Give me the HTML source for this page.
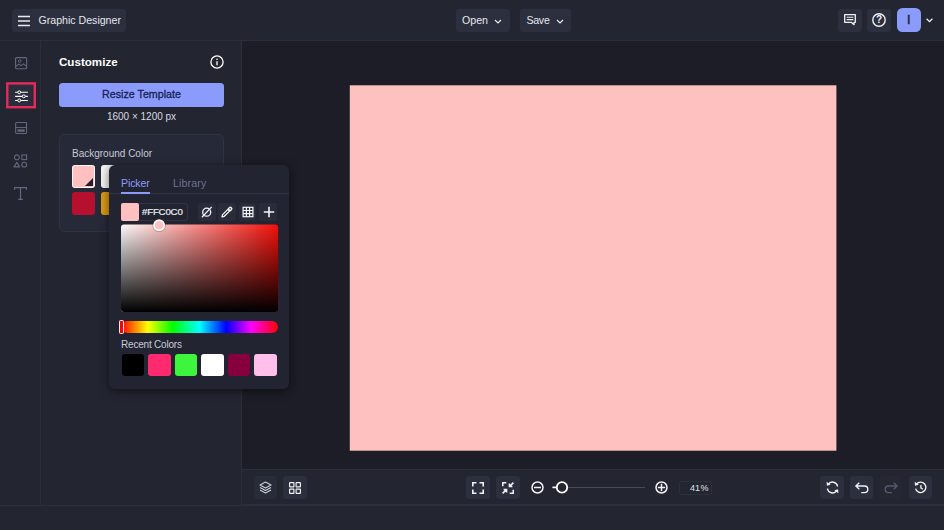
<!DOCTYPE html>
<html>
<head>
<meta charset="utf-8">
<title>Graphic Designer</title>
<style>
*{box-sizing:border-box;margin:0;padding:0}
html,body{width:944px;height:530px;overflow:hidden;background:#232531;font-family:"Liberation Sans",sans-serif;color:#e9eaf0}
.abs{position:absolute}
#top{left:0;top:0;width:944px;height:41px;background:#232531;border-bottom:1px solid #2b2e3c}
.btn{position:absolute;background:#2c2f3d;border-radius:3px}
.btn span{position:absolute;white-space:nowrap;font-size:10.6px;color:#e6e7ee;line-height:14px}
#side{left:0;top:41px;width:41px;height:464px;background:#232531;border-right:1px solid #2b2e3c}
#panel{left:41px;top:41px;width:201px;height:464px;background:#232531;border-right:1px solid #2b2e3c}
#stage{left:242px;top:41px;width:702px;height:428px;background:#1c1d27}
#bbar{left:242px;top:469px;width:702px;height:36px;background:#232531;border-top:1px solid #2b2e3c;border-bottom:1px solid #2b2e3c}
#foot{left:0;top:505px;width:944px;height:25px;background:#232531;border-top:1px solid #2b2e3c}
svg{position:absolute;overflow:visible}
.sw{position:absolute;border-radius:3px}
</style>
</head>
<body>
<div class="abs" id="top"></div>
<div class="abs" id="side"></div>
<div class="abs" id="panel"></div>
<div class="abs" id="stage"></div>
<svg style="left:0;top:0" width="944" height="530"><rect x="349.8" y="85.300" width="486.600" height="365.400" fill="#ffc0c0"/></svg>
<div class="abs" id="bbar"></div>
<div class="abs" id="foot"></div>

<!-- top bar -->
<div class="btn" style="left:12px;top:8.5px;width:114px;height:23px">
  <svg style="left:6px;top:6px" width="12" height="12" viewBox="0 0 12 12"><path d="M0 1.5h12M0 6h12M0 10.5h12" stroke="#e9eaf0" stroke-width="1.3" fill="none"/></svg>
  <span style="left:26.5px;top:4.5px">Graphic Designer</span>
</div>
<div class="btn" style="left:456px;top:8.5px;width:53.5px;height:23px">
  <span style="left:6px;top:4.5px">Open</span>
  <svg style="left:38px;top:10px" width="8" height="5" viewBox="0 0 8 5"><path d="M1 1l3 3 3-3" stroke="#e9eaf0" stroke-width="1.2" fill="none"/></svg>
</div>
<div class="btn" style="left:520px;top:8.5px;width:51px;height:23px">
  <span style="left:6.4px;top:4.5px;letter-spacing:-.25px">Save</span>
  <svg style="left:36px;top:10px" width="8" height="5" viewBox="0 0 8 5"><path d="M1 1l3 3 3-3" stroke="#e9eaf0" stroke-width="1.2" fill="none"/></svg>
</div>
<div class="btn" style="left:838px;top:8.5px;width:23.5px;height:23px">
  <svg style="left:5.5px;top:5.5px" width="12" height="12" viewBox="0 0 12 12"><path d="M.7.7h10.600v7.600H10v2.400L7.300 8.300H.7z" stroke="#f1f2f6" stroke-width="1.300" fill="none" stroke-linejoin="round"/><path d="M2.600 3.300h6.800M2.600 5.600h6.800" stroke="#f1f2f6" stroke-width="1.100"/></svg>
</div>
<div class="btn" style="left:867px;top:8.500px;width:23.5px;height:23px">
  <svg style="left:5.2px;top:4.500px" width="14" height="14" viewBox="0 0 14 14"><circle cx="7" cy="7" r="6.200" stroke="#f1f2f6" stroke-width="1.400" fill="none"/><text x="7" y="10.300" font-size="10" font-weight="bold" text-anchor="middle" fill="#f1f2f6" font-family="Liberation Sans, sans-serif">?</text></svg>
</div>
<div class="btn" style="left:896.500px;top:8px;width:24px;height:24px;background:#8b9bfb;border-radius:5.500px">
  <span style="left:10.400px;top:5px;color:#1b1d2a;font-size:12.500px;-webkit-text-stroke:.45px #1b1d2a">I</span>
</div>
<svg style="left:926px;top:18px" width="7" height="5" viewBox="0 0 7 5"><path d="M0.600 0.700l2.900 2.900 2.900-2.900" stroke="#f1f2f6" stroke-width="1.300" fill="none"/></svg>

<!-- sidebar icons -->
<svg style="left:14.600px;top:57.200px" width="12.200" height="12.400" viewBox="0 0 13 13"><rect x=".6" y=".6" width="11.8" height="11.8" rx="1" stroke="#62667f" stroke-width="1.2" fill="none"/><circle cx="5" cy="4.2" r="1.4" stroke="#62667f" stroke-width="1" fill="none"/><path d="M.6 10l3.4-2.6 2.4 1.8 2.6-2 3.4 2.8" stroke="#62667f" stroke-width="1.1" fill="none"/></svg>
<svg style="left:0;top:0" width="45" height="120"><rect x="7.300" y="83.400" width="27.500" height="23.800" fill="#2a2d3b" stroke="#e8295c" stroke-width="2.400"/></svg>
<svg style="left:15px;top:90px" width="13" height="12.700" viewBox="0 0 14 14"><path d="M0 2.5h14M0 7h14M0 11.5h14" stroke="#fff" stroke-width="1.2" fill="none"/><circle cx="4.5" cy="2.5" r="1.6" fill="#2a2d3b" stroke="#fff" stroke-width="1.1"/><circle cx="9.5" cy="7" r="1.6" fill="#2a2d3b" stroke="#fff" stroke-width="1.1"/><circle cx="4.5" cy="11.5" r="1.6" fill="#2a2d3b" stroke="#fff" stroke-width="1.1"/></svg>
<svg style="left:14.900px;top:122px" width="12.200" height="12" viewBox="0 0 13 13"><rect x=".6" y=".6" width="11.8" height="11.8" rx="1" stroke="#62667f" stroke-width="1.2" fill="none"/><path d="M.6 6h11.8" stroke="#62667f" stroke-width="1.1"/><rect x="2.6" y="8" width="7.8" height="2.6" fill="#62667f"/></svg>
<svg style="left:13px;top:154px" width="15" height="14" viewBox="0 0 15 15" fill="none" stroke="#62667f" stroke-width="1.2"><circle cx="3.6" cy="3.6" r="2.6"/><rect x="9" y="1" width="5" height="5"/><path d="M3.6 8.8l3 5H.6z" stroke-linejoin="round"/><circle cx="11.5" cy="11.4" r="2.6"/></svg>
<svg style="left:14px;top:187px" width="13" height="13" viewBox="0 0 13 13" fill="none" stroke="#62667f" stroke-width="1.2"><path d="M.6 2.800V.6h11.800v2.200M6.500.6v11.800M4.200 12.400h4.600"/></svg>

<!-- panel -->
<div class="abs" style="left:59px;top:54px;font-size:11.6px;font-weight:bold;color:#fff;line-height:16px">Customize</div>
<svg style="left:210px;top:55px" width="14" height="14" viewBox="0 0 14 14"><circle cx="7" cy="7" r="6.100" stroke="#fff" stroke-width="1.300" fill="none"/><path d="M7 6.2v4" stroke="#fff" stroke-width="1.3"/><circle cx="7" cy="4.2" r=".8" fill="#fff"/></svg>
<div class="abs" style="left:59px;top:83px;width:165px;height:23.500px;background:#8b9bfc;border-radius:3.5px;text-align:center;font-size:10.7px;line-height:23.5px;color:#171f55;-webkit-text-stroke:.3px #171f55">Resize Template</div>
<div class="abs" style="left:59px;top:109.600px;width:165px;text-align:center;font-size:10px;line-height:14px;color:#d8d9e2">1600 × 1200 px</div>
<div class="abs" style="left:59px;top:134px;width:165px;height:98px;background:#262937;border:1px solid #2f3241;border-radius:5px"></div>
<div class="abs" style="left:72px;top:147px;font-size:10px;line-height:13px;color:#c9cad6">Background Color</div>
<div class="sw" style="left:72px;top:165px;width:23px;height:23px;background:#ffc0c0;border:1px solid rgba(255,255,255,.85)"></div>
<svg style="left:85px;top:178px" width="8" height="8" viewBox="0 0 8 8"><path d="M8 0v8H0z" fill="#1f212d"/></svg>
<div class="sw" style="left:101px;top:165px;width:23px;height:23px;background:#f4f4f4"></div>
<div class="sw" style="left:72px;top:192px;width:23px;height:23px;background:#b5102e"></div>
<div class="sw" style="left:101px;top:192px;width:23px;height:23px;background:#d99a16"></div>

<!-- picker popup -->
<div class="abs" style="left:109px;top:165px;width:180px;height:224px;background:#222431;border-radius:6px;box-shadow:0 2px 10px rgba(0,0,0,.55)"></div>
<div class="abs" style="left:109px;top:193px;width:180px;height:1px;background:#313444"></div>
<div class="abs" style="left:121px;top:175.600px;font-size:10.6px;letter-spacing:-.12px;line-height:14px;color:#8b9bfb">Picker</div>
<div class="abs" style="left:121px;top:192px;width:29px;height:2px;background:#8b9bfb"></div>
<div class="abs" style="left:173px;top:175.600px;font-size:10.6px;letter-spacing:.16px;line-height:14px;color:#6f7390">Library</div>
<div class="abs" style="left:121px;top:203px;width:67px;height:18px;border:1px solid #313444;border-radius:3px"></div>
<div class="abs" style="left:121px;top:203px;width:18px;height:18px;background:#ffc0c0;border-radius:2px"></div>
<div class="abs" style="left:142px;top:204.800px;font-size:9.700px;line-height:14px;color:#eceef3;letter-spacing:-.2px;-webkit-text-stroke:.2px #eceef3">#FFC0C0</div>
<div class="btn" style="left:198px;top:203px;width:18px;height:18px;background:#292c3a"></div>
<div class="btn" style="left:218px;top:203px;width:18px;height:18px;background:#292c3a"></div>
<div class="btn" style="left:239px;top:203px;width:17px;height:18px;background:#292c3a"></div>
<div class="btn" style="left:259px;top:203px;width:18px;height:18px;background:#292c3a"></div>
<svg style="left:201px;top:206px" width="12" height="12" viewBox="0 0 12 12" fill="none" stroke="#f4f5f8" stroke-width="1.300"><circle cx="5.700" cy="6.200" r="4"/><path d="M.9 11.200L10.700.9"/></svg>
<svg style="left:221px;top:206px" width="12" height="12" viewBox="0 0 12 12" fill="none" stroke="#f4f5f8" stroke-width="1.300" stroke-linejoin="round"><path d="M1 10.900l.6-2.300 5.200-5.200 1.700 1.700-5.200 5.200z"/><path d="M7.300 2.900l1.100-1.300a1.500 1.500 0 012.100 2.100L9.100 4.800z" fill="#f4f5f8" fill-opacity=".25"/></svg>
<svg style="left:242px;top:206px" width="12" height="12" viewBox="0 0 12 12" fill="none" stroke="#f4f5f8" stroke-width="1.200"><rect x="1.100" y="1.300" width="9.800" height="9.400"/><path d="M4.400 1.300v9.400M7.600 1.300v9.400M1.100 4.500h9.800M1.100 7.600h9.800"/></svg>
<svg style="left:262.500px;top:206px" width="12" height="12" viewBox="0 0 12 12" fill="none" stroke="#f4f5f8" stroke-width="1.600"><path d="M6 .8v10.400M.8 6h10.400"/></svg>

<svg style="left:0;top:0" width="944" height="530"><defs><linearGradient id="gh" x1="0" y1="0" x2="1" y2="0"><stop offset="0" stop-color="#fbfbfb"/><stop offset="1" stop-color="#f4100a"/></linearGradient><linearGradient id="gv" x1="0" y1="0" x2="0" y2="1"><stop offset="0" stop-color="#000" stop-opacity="0"/><stop offset="1" stop-color="#000"/></linearGradient></defs><rect x="121" y="224.500" width="157.100" height="87.500" rx="3" fill="url(#gh)"/><rect x="121" y="224.500" width="157.100" height="87.500" rx="3" fill="url(#gv)"/></svg>
<svg style="left:152px;top:218px" width="14" height="14" viewBox="0 0 14 14"><circle cx="7.100" cy="7.300" r="6.600" fill="rgba(0,0,0,.25)"/><circle cx="7.100" cy="7.300" r="5.100" fill="#ffc0c0" stroke="#fff" stroke-width="1.700"/></svg>
<div class="abs" style="left:121px;top:321px;width:157px;height:12px;border-radius:6px;background:linear-gradient(to right,#f00 0%,#ff0 17%,#0f0 33%,#0ff 50%,#00f 67%,#f0f 83%,#f00 100%)"></div>
<div class="abs" style="left:118.5px;top:320px;width:5px;height:14px;border-radius:1.5px;background:#f00;border:1.5px solid #fff"></div>
<div class="abs" style="left:121px;top:338px;font-size:10px;letter-spacing:-.2px;line-height:13px;color:#c9cad6">Recent Colors</div>
<div class="sw" style="left:122px;top:354px;width:22px;height:22px;background:#000"></div>
<div class="sw" style="left:148px;top:354px;width:23px;height:22px;background:#ff2a6d"></div>
<div class="sw" style="left:175px;top:354px;width:22px;height:22px;background:#3df53d"></div>
<div class="sw" style="left:201px;top:354px;width:23px;height:22px;background:#fff"></div>
<div class="sw" style="left:228px;top:354px;width:22px;height:22px;background:#85003c"></div>
<div class="sw" style="left:254px;top:354px;width:23px;height:22px;background:#ffbfea"></div>

<!-- bottom bar -->
<div class="btn" style="left:254px;top:476px;width:23px;height:23px;background:#282b38"></div>
<svg style="left:259px;top:481px" width="13" height="13" viewBox="0 0 13 13" fill="none" stroke="#c6c8d4" stroke-width="1.200" stroke-linejoin="round"><path d="M6.500 1l5.500 3-5.500 3L1 4z"/><path d="M1 6.500l5.500 3 5.500-3M1 9l5.500 3L12 9"/></svg>
<div class="btn" style="left:283px;top:476px;width:24px;height:23px"></div>
<svg style="left:289px;top:481.500px" width="12" height="12" viewBox="0 0 12 12" fill="none" stroke="#f1f2f6" stroke-width="1.150"><rect x=".6" y=".6" width="4.300" height="4.300" rx=".4"/><rect x="7.100" y=".6" width="4.300" height="4.300" rx=".4"/><rect x=".6" y="7.100" width="4.300" height="4.300" rx=".4"/><rect x="7.100" y="7.100" width="4.300" height="4.300" rx=".4"/></svg>

<div class="btn" style="left:466px;top:476px;width:24px;height:23px"></div>
<svg style="left:472px;top:481.500px" width="12" height="12" viewBox="0 0 12 12" fill="none" stroke="#f1f2f6" stroke-width="1.600"><path d="M.8 4.500V.8h3.700M7.500.8h3.700v3.700M11.200 7.500v3.700H7.500M4.500 11.200H.8V7.500"/></svg>
<div class="btn" style="left:496px;top:476px;width:24px;height:23px"></div>
<svg style="left:501.500px;top:481.500px" width="12" height="12" viewBox="0 0 12 12" fill="none" stroke="#f1f2f6" stroke-width="1.500"><path d="M.8 4.300V.8h3.500M7.700 11.200h3.500V7.700"/><path d="M11.400.6L7.400 4.600M7.400 1.600v3h3M.6 11.400l4-4M4.600 10.400v-3h-3"/></svg>
<svg style="left:530.500px;top:481px" width="13" height="13" viewBox="0 0 13 13" fill="none" stroke="#f1f2f6" stroke-width="1.500"><circle cx="6.500" cy="6.500" r="5.500"/><path d="M3 6.500h7"/></svg>
<div class="abs" style="left:552px;top:486.500px;width:93px;height:1.500px;background:#474b5f"></div>
<svg style="left:552px;top:481px" width="17" height="13" viewBox="0 0 17 13"><path d="M.5 6.400h4" stroke="#fff" stroke-width="1.700"/><circle cx="10" cy="6.400" r="5.200" fill="#232531" stroke="#fff" stroke-width="1.800"/></svg>
<svg style="left:654.500px;top:481px" width="13" height="13" viewBox="0 0 13 13" fill="none" stroke="#f1f2f6" stroke-width="1.500"><circle cx="6.500" cy="6.500" r="5.500"/><path d="M2.800 6.500h7.400M6.500 2.800v7.400"/></svg>
<div class="abs" style="left:679px;top:481px;width:33px;height:14px;border:1px solid #2c2f3e;border-radius:2px;font-size:9px;word-spacing:-2px;line-height:12px;color:#e0e1ea;text-align:right;padding-right:2.5px">41 %</div>

<div class="btn" style="left:820px;top:476px;width:24px;height:23px"></div>
<div class="btn" style="left:850px;top:476px;width:23px;height:23px"></div>
<div class="btn" style="left:879px;top:476px;width:23px;height:23px;background:#252733"></div>
<div class="btn" style="left:909px;top:476px;width:23px;height:23px"></div>
<svg style="left:825.500px;top:481px" width="13" height="13" viewBox="0 0 13 13" fill="none" stroke="#f1f2f6" stroke-width="1.350"><path d="M2.200 3.300A5.200 5.200 0 0111.600 5.500M10.800 9.700A5.200 5.200 0 011.400 7.500"/><path d="M.6.800l.3 3.900 3.700-.9zM12.400 12.200l-.3-3.900-3.700.9z" fill="#f1f2f6" stroke="none"/></svg>
<svg style="left:855px;top:482px" width="14" height="12" viewBox="0 0 14 12" fill="none" stroke="#f1f2f6" stroke-width="1.350"><path d="M4.300.8L.9 4l3.400 3.200M.9 4h8.600a3.300 3.300 0 010 6.600H6.200"/></svg>
<svg style="left:883.500px;top:482px" width="14" height="12" viewBox="0 0 14 12" fill="none" stroke="#565a72" stroke-width="1.350"><path d="M9.700.8L13.100 4 9.700 7.200M13.100 4H4.500a3.300 3.300 0 000 6.600h3.300"/></svg>
<svg style="left:914px;top:481px" width="13" height="13" viewBox="0 0 13 13" fill="none" stroke="#f1f2f6" stroke-width="1.350"><path d="M2.500 3.200A5.200 5.200 0 111.600 7.600"/><path d="M.7.700l.3 4 3.800-1z" fill="#f1f2f6" stroke="none"/><path d="M6.900 3.900v2.900l1.900 1.400" stroke-width="1.300"/></svg>
</body>
</html>
